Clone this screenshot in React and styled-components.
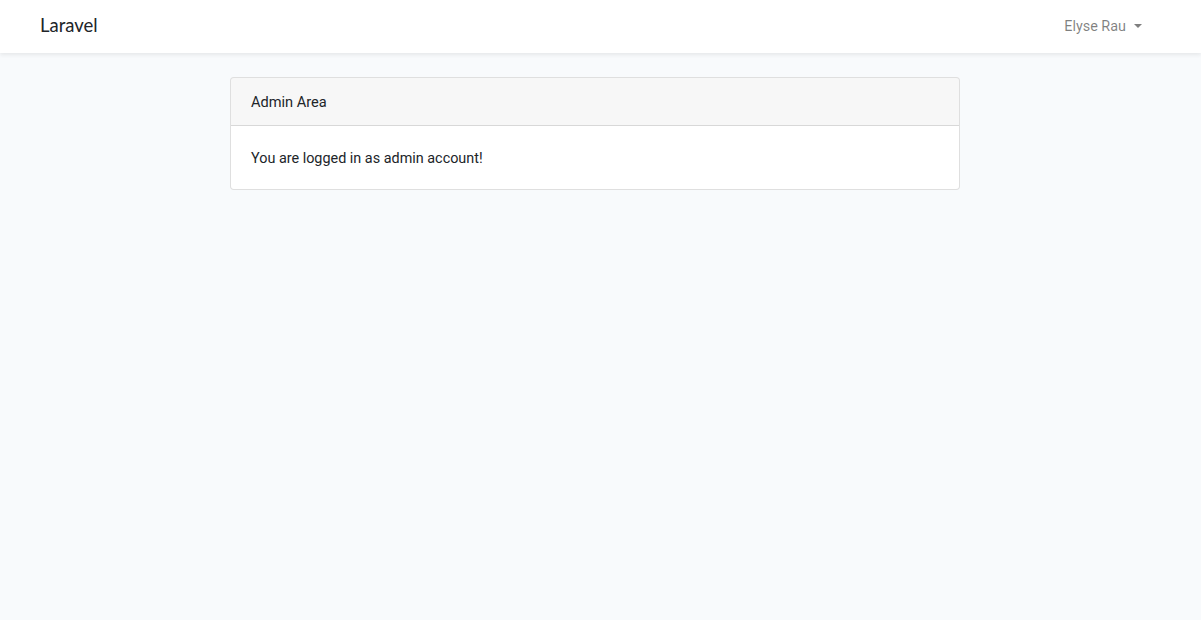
import React from 'react';
import styled, { createGlobalStyle } from 'styled-components';

const GlobalStyle = createGlobalStyle`
  html, body {
    margin: 0;
    padding: 0;
  }

  body {
    background-color: #f8fafc;
    font-family: Roboto, "Liberation Sans", sans-serif;
    font-size: 14.4px;
    line-height: 1.6;
    color: #212529;
    min-height: 620px;
  }
`;

const App = () => {
  return (
    <>
      <GlobalStyle />
      <Navbar>
        <Container>
          <NavInner>
            <Brand href="#">Laravel</Brand>
            <NavLink href="#">
              Elyse Rau
              <Caret />
            </NavLink>
          </NavInner>
        </Container>
      </Navbar>
      <Main>
        <Container>
          <Row>
            <Card>
              <CardHeader>Admin Area</CardHeader>
              <CardBody>You are logged in as admin account!</CardBody>
            </Card>
          </Row>
        </Container>
      </Main>
    </>
  );
};

const Navbar = styled.nav`
  background-color: #fff;
  box-shadow: 0 0.125rem 0.25rem rgba(0, 0, 0, 0.075);
  padding: 8px 0;
  position: relative;
`;

const Container = styled.div`
  width: 1140px;
  box-sizing: border-box;
  padding: 0 15px;
  margin-left: 25px;
`;

const NavInner = styled.div`
  display: flex;
  align-items: center;
  justify-content: space-between;
  height: 37px;
`;

const Brand = styled.a`
  font-family: Lato, "Noto Sans", sans-serif;
  font-size: 18.5px;
  color: #212529;
  text-decoration: none;
  line-height: 1;
  margin-top: -3px;
`;

const NavLink = styled.a`
  display: flex;
  align-items: center;
  padding: 8px;
  color: rgba(0, 0, 0, 0.5);
  text-decoration: none;
  font-size: 14.4px;
`;

const Caret = styled.span`
  display: inline-block;
  margin-left: 8px;
  border-top: 4.3px solid;
  border-right: 4.3px solid transparent;
  border-left: 4.3px solid transparent;
  margin-top: -2px;
`;

const Main = styled.main`
  padding: 24px 0;
`;

const Row = styled.div`
  display: flex;
  justify-content: center;
`;

const Card = styled.div`
  width: 730px;
  box-sizing: border-box;
  background-color: #fff;
  border: 1px solid rgba(0, 0, 0, 0.125);
  border-radius: 4px;
  overflow: hidden;
`;

const CardHeader = styled.div`
  padding: 13px 20px 11px;
  font-size: 14.6px;
  background-color: rgba(0, 0, 0, 0.03);
  border-bottom: 1px solid rgba(0, 0, 0, 0.125);
`;

const CardBody = styled.div`
  padding: 21px 20px 19px;
`;

export default App;
